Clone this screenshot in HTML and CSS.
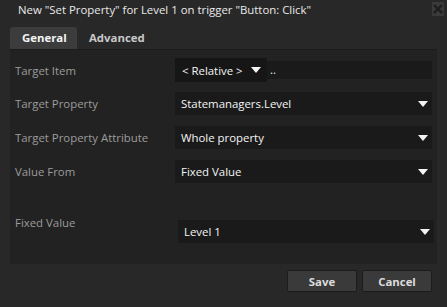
FILE: index.html
```html
<!DOCTYPE html>
<html lang="en">
<head>
  <meta charset="UTF-8" />
  <title>Set Property</title>
  <link rel="stylesheet" href="styles.css">
</head>
<body>
  <div class="dialog">
    <div class="titlebar">
      <span class="title">New "Set Property" for Level 1 on trigger "Button: Click"</span>
      <span class="close">
        <svg width="10" height="10" viewBox="0 0 10 10"><path d="M1 1 L9 9 M9 1 L1 9" stroke="#1e1e1e" stroke-width="2.4"/></svg>
      </span>
    </div>

    <div class="tabs">
      <div class="tab active">General</div>
      <div class="tab">Advanced</div>
    </div>

    <div class="panel">
      <div class="row first">
        <div class="label">Target Item</div>
        <div class="item-picker">
          <div class="relative">&lt; Relative &gt; <span class="arrow"></span></div>
          <div class="path">..</div>
        </div>
      </div>
      <div class="row">
        <div class="label">Target Property</div>
        <div class="combo">Statemanagers.Level<span class="arrow"></span></div>
      </div>
      <div class="row">
        <div class="label">Target Property Attribute</div>
        <div class="combo">Whole property<span class="arrow"></span></div>
      </div>
      <div class="row">
        <div class="label">Value From</div>
        <div class="combo">Fixed Value<span class="arrow"></span></div>
      </div>
      <div class="row fixed">
        <div class="label">Fixed Value</div>
        <div class="combo">Level 1<span class="arrow"></span></div>
      </div>
    </div>

    <div class="footer">
      <button class="btn">Save</button>
      <button class="btn">Cancel</button>
    </div>
  </div>
</body>
</html>
```

FILE: styles.css
```css
body {
  margin: 0;
  padding: 0;
  background-color: #282828;
  font-family: 'Open Sans', sans-serif;
  font-size: 11.4px;
  color: #f0f0f0;
}

.dialog {
  width: 447px;
  height: 307px;
}

.titlebar {
  height: 18px;
  display: flex;
  align-items: center;
  justify-content: space-between;
  padding-left: 18px;
}

.title {
  color: #e8e8e8;
}

.close {
  width: 12px;
  height: 14px;
  margin-right: 3px;
  background-color: #3a3a3a;
  display: flex;
  align-items: center;
  justify-content: center;
}

.tabs {
  display: flex;
  margin: 9px 0 0 10px;
  height: 22px;
  border-bottom: 1px solid #1c1c1c;
  width: 427px;
}

.tab {
  height: 22px;
  line-height: 22px;
  font-weight: bold;
  color: #c8c8c8;
  padding: 0 12px;
}

.tab.active {
  width: 67px;
  box-sizing: border-box;
  padding: 0 0 0 12px;
  background-color: #3c3c3c;
  border-radius: 3px 3px 0 0;
  color: #f4f4f4;
}

.panel {
  margin: 0 10px;
  height: 214px;
  box-sizing: border-box;
  padding: 8px 5px 0 5px;
  background-color: #222;
}

.row {
  display: flex;
  align-items: center;
  margin-top: 11px;
}

.row.first {
  margin-top: 0;
}

.row.first + .row {
  margin-top: 10px;
}

.label {
  width: 160px;
  color: #9c9c9c;
}

.combo {
  flex: 1;
  height: 23px;
  background-color: #1a1a1a;
  display: flex;
  align-items: center;
  justify-content: space-between;
  padding: 0 4px 0 6px;
  color: #f4f4f4;
}

.arrow {
  width: 0;
  height: 0;
  border-left: 5px solid transparent;
  border-right: 5px solid transparent;
  border-top: 6px solid #f4f4f4;
}

.item-picker {
  flex: 1;
  display: flex;
  align-items: center;
}

.relative {
  width: 92px;
  height: 24px;
  box-sizing: border-box;
  padding-left: 7px;
  background-color: #161616;
  display: flex;
  align-items: center;
  gap: 8px;
  color: #f4f4f4;
}

.path {
  flex: 1;
  height: 18px;
  line-height: 18px;
  background-color: #1a1a1a;
  padding-left: 3px;
}

.row.fixed {
  align-items: flex-start;
  margin-top: 32px;
}

.row.fixed .combo {
  margin: 5px -2px 0 3px;
}

.footer {
  display: flex;
  justify-content: flex-end;
  gap: 5px;
  padding: 6px 15px 0 0;
}

.btn {
  width: 70px;
  height: 22px;
  background-color: #3a3a3a;
  border: 1px solid #1c1c1c;
  border-radius: 2px;
  color: #dcdcdc;
  font-family: 'Open Sans', sans-serif;
  font-size: 11.4px;
  font-weight: bold;
}
```
